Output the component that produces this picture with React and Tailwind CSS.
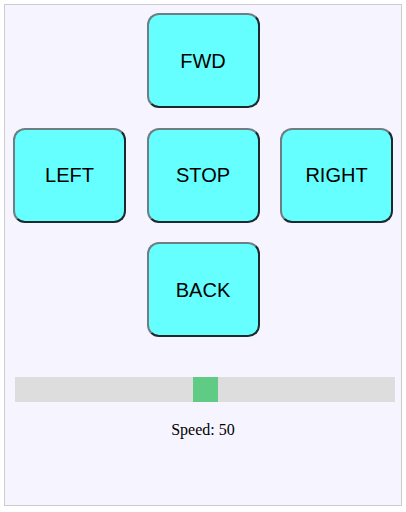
export default function App() {
  const Btn = ({ label }) => (
    <button
      className="w-[113px] h-[95px] rounded-[12px] bg-[#66ffff] border-2 border-t-[#6f7e82] border-l-[#6f7e82] border-b-[#1c2a2e] border-r-[#1c2a2e] text-[20px] text-black flex items-center justify-center"
      style={{ fontFamily: '"Liberation Sans", Arial, sans-serif' }}
    >
      {label}
    </button>
  );

  return (
    <div className="w-[406px] h-[512px] bg-white pt-[4px] pl-[4px]">
      <div className="w-[398px] h-[502px] border border-[#cccccc] bg-[#f6f5ff] pt-[8px] flex flex-col">
        <div className="grid grid-cols-[113px_113px_113px] gap-x-[20.5px] gap-y-[19.5px] justify-center">
          <div />
          <Btn label="FWD" />
          <div />
          <Btn label="LEFT" />
          <Btn label="STOP" />
          <Btn label="RIGHT" />
          <div />
          <Btn label="BACK" />
          <div />
        </div>
        <div className="mt-[40px] ml-[10px] w-[380px] h-[25px] bg-[#dddddd] relative">
          <div className="absolute left-[178px] top-0 w-[25px] h-[25px] bg-[#5fcb85]" />
        </div>
        <div
          className="mt-[16px] text-center text-[16px] text-black"
          style={{ fontFamily: '"Liberation Serif", "Times New Roman", serif' }}
        >
          Speed: 50
        </div>
      </div>
    </div>
  );
}
